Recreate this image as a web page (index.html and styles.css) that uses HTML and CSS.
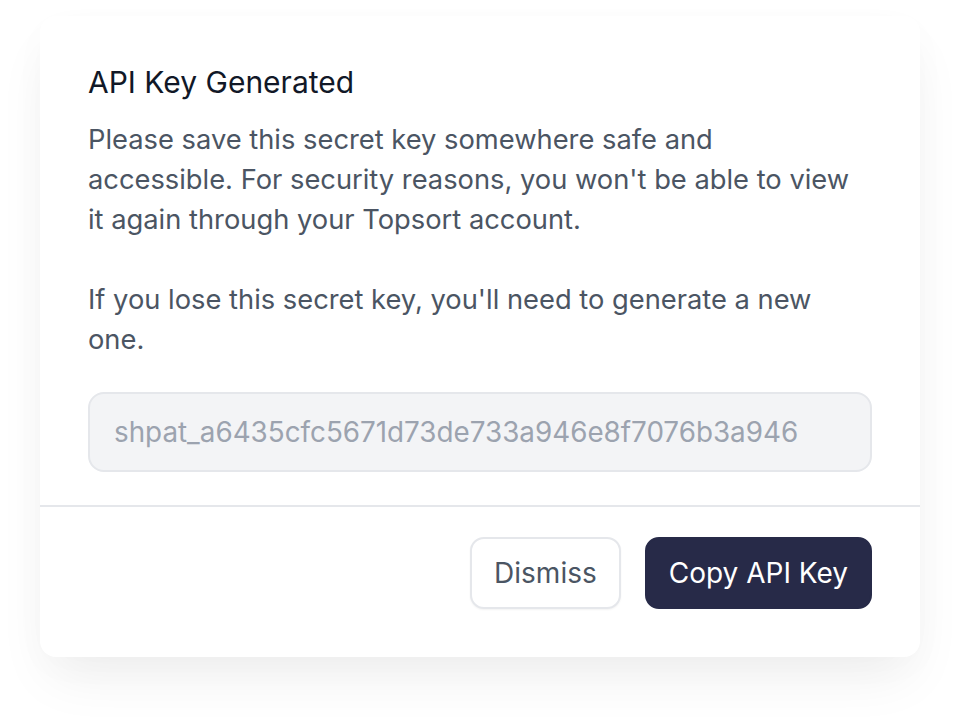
FILE: index.html
```html
<!DOCTYPE html>
<html lang="en">
<head>
<meta charset="utf-8">
<title>API Key Generated</title>
<link rel="stylesheet" href="styles.css">
</head>
<body>
<div class="page">
  <div class="card">
    <div class="body">
      <h1 class="title">API Key Generated</h1>
      <p class="text">Please save this secret key somewhere safe and accessible. For security reasons, you won't be able to view it again through your Topsort account.</p>
      <p class="text">If you lose this secret key, you'll need to generate a new one.</p>
      <div class="key">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3a946</div>
    </div>
    <div class="footer">
      <button class="btn btn-secondary">Dismiss</button>
      <button class="btn btn-primary">Copy API Key</button>
    </div>
  </div>
</div>
</body>
</html>
```
FILE: styles.css
```css
* { box-sizing: border-box; }
html, body { margin: 0; padding: 0; background: #ffffff; }
body { font-family: Inter, "Noto Sans", sans-serif; }
.page { padding: 16px 40px 0 40px; min-height: 728px; }
.card {
  width: 880px;
  background: #ffffff;
  border-radius: 16px;
  box-shadow: 0 28px 56px -10px rgba(0,0,0,0.065), 0 10px 40px rgba(0,0,0,0.02);
}
.body { padding: 48px 48px 33px 48px; }
.title {
  margin: 0;
  font-size: 30px;
  line-height: 36px;
  font-weight: 400;
  color: #111827;
}
.text {
  max-width: 770px;
  margin: 20px 0 40px 0;
  font-size: 27.3px;
  line-height: 40px;
  color: #4b5563;
}
.text + .text { margin-top: 0; margin-bottom: 32px; }
.key {
  height: 80px;
  display: flex;
  align-items: center;
  padding: 0 24px;
  background: #f3f4f6;
  border: 2px solid #e5e7eb;
  border-radius: 16px;
  font-size: 27.8px;
  color: #9ca3af;
}
.footer {
  border-top: 2px solid #e5e7eb;
  display: flex;
  justify-content: flex-end;
  gap: 24px;
  padding: 30px 48px 48px 48px;
}
.btn {
  height: 72px;
  border-radius: 14px;
  font-family: Inter, "Noto Sans", sans-serif;
  font-size: 28px;
  padding: 0 22px;
  cursor: pointer;
}
.btn-secondary {
  background: #ffffff;
  border: 2px solid #e5e7eb;
  color: #4b5563;
  box-shadow: 0 1px 2px rgba(0,0,0,0.05);
}
.btn-primary {
  background: #272a48;
  border: 2px solid #272a48;
  color: #ffffff;
}
```
